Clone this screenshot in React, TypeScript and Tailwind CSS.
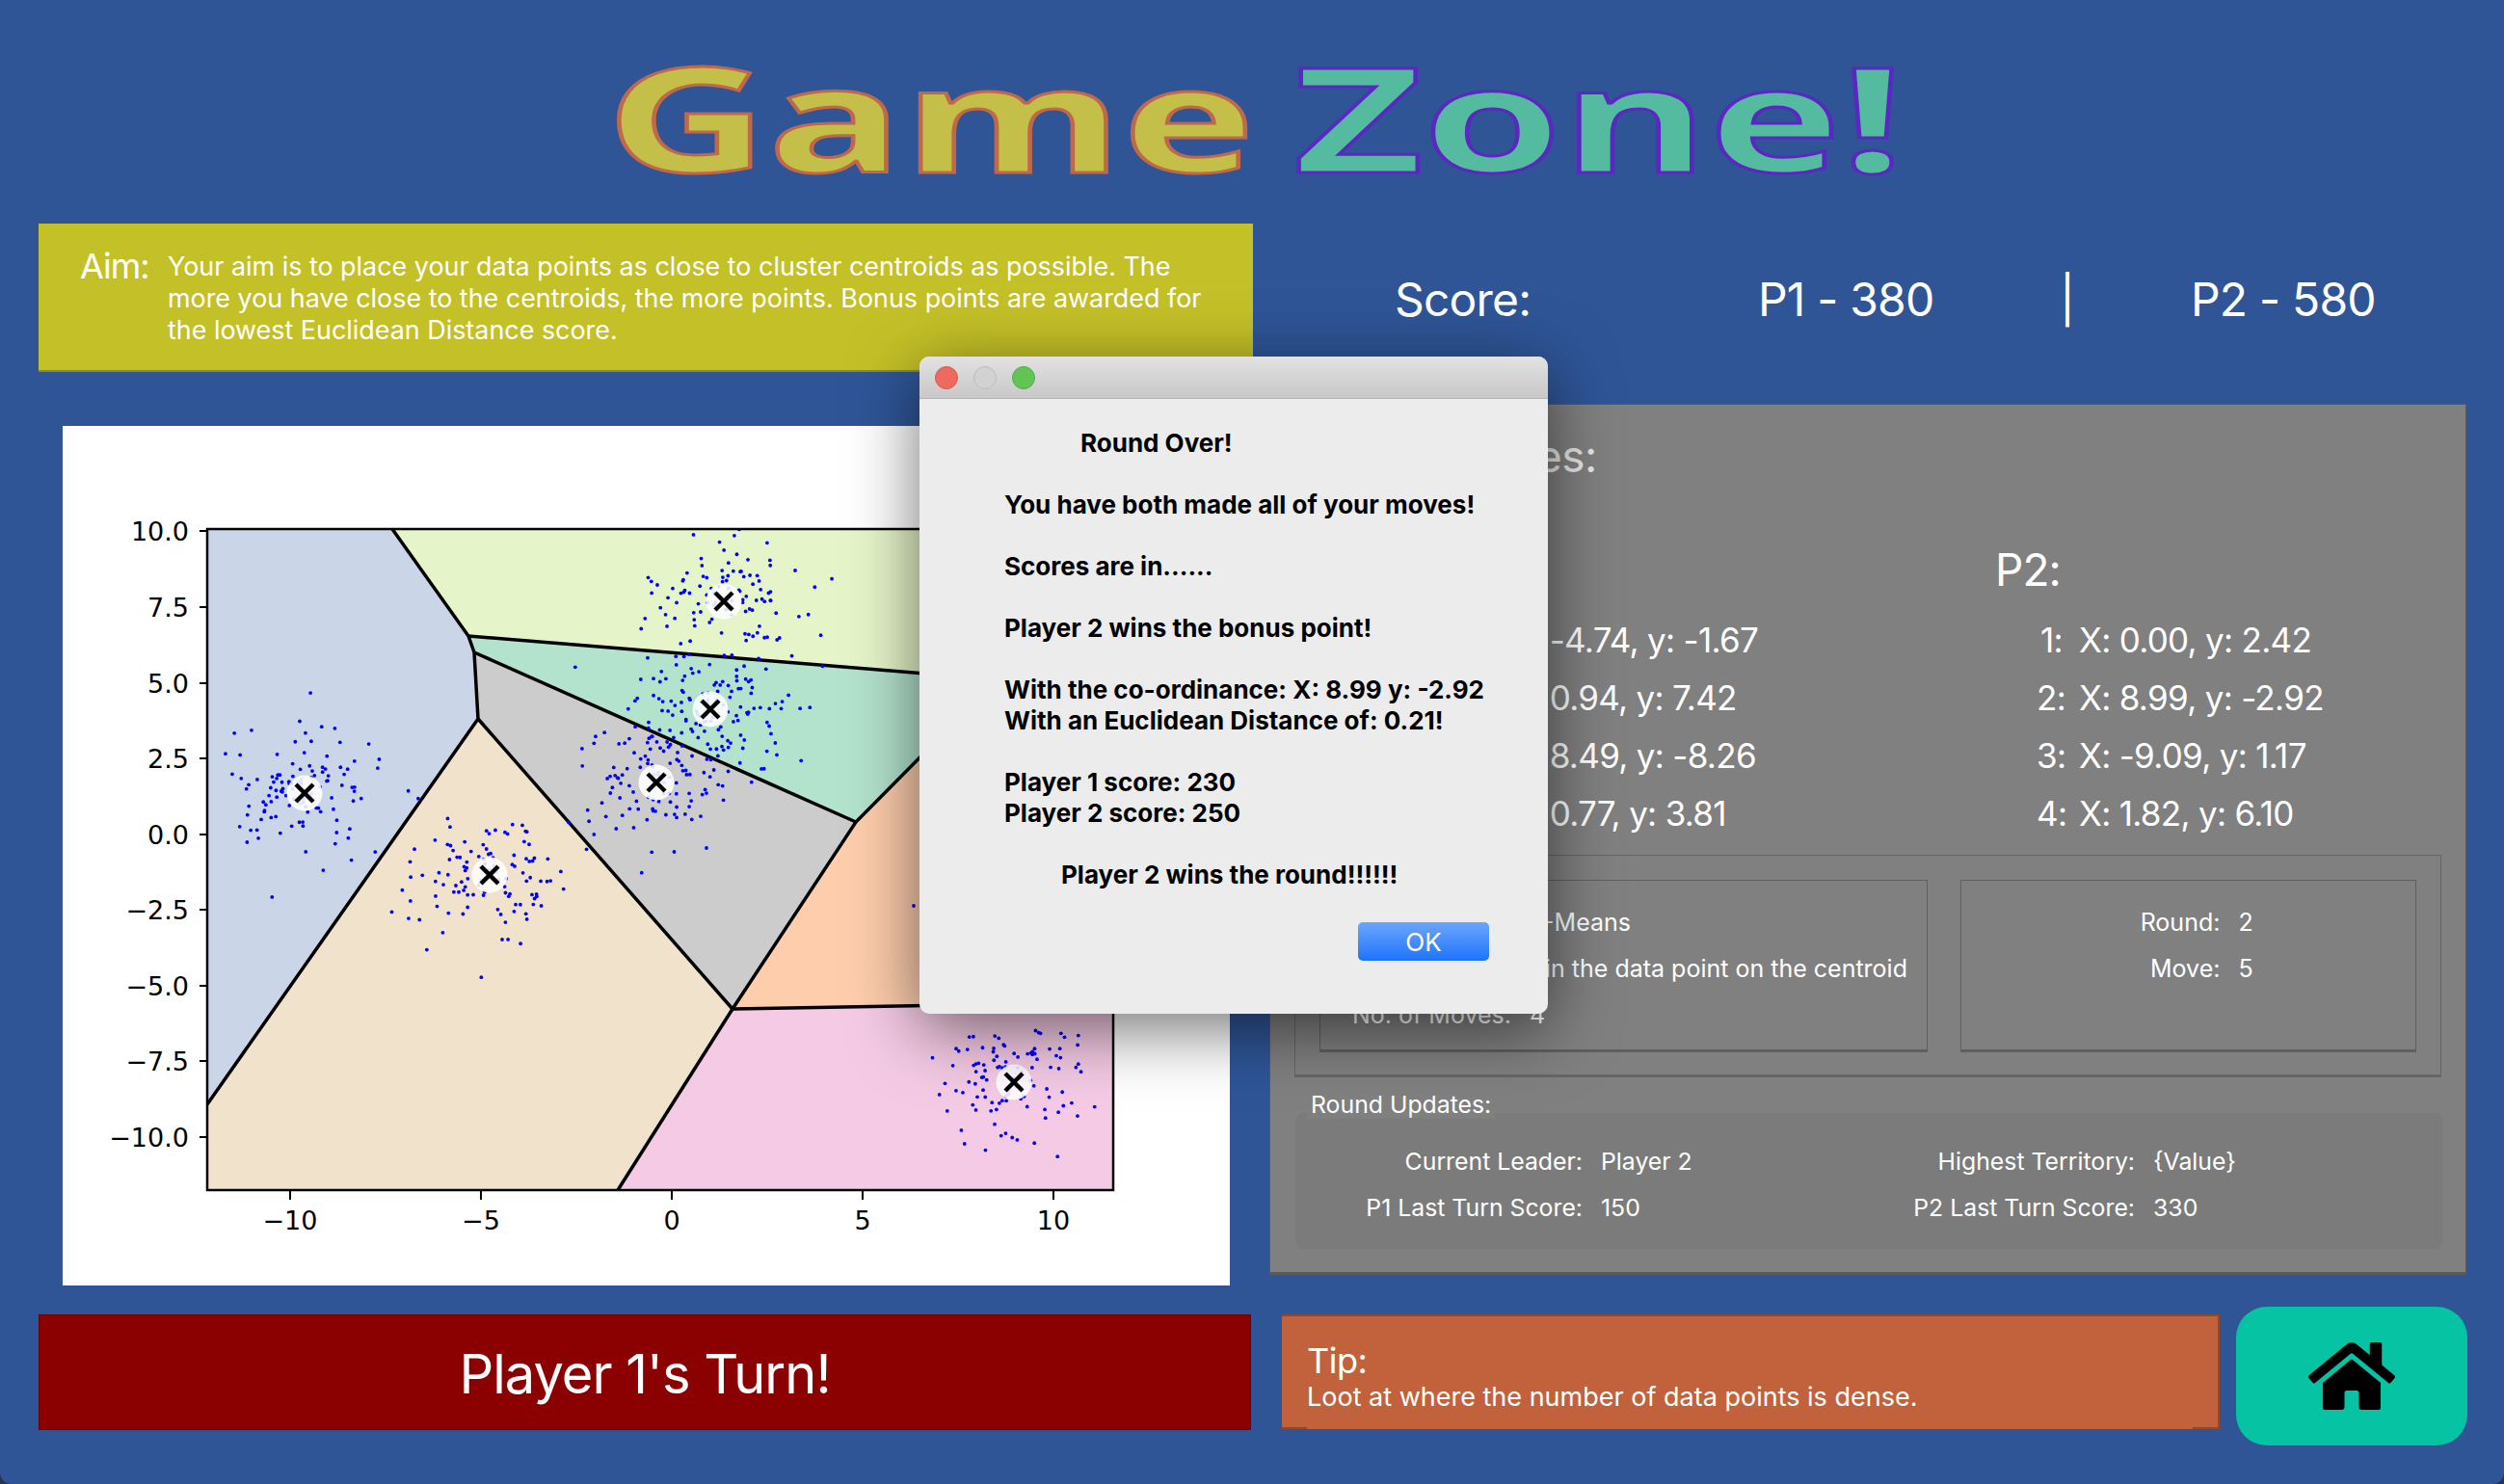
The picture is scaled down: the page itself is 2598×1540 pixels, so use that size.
import React from 'react';
import { FaHome } from 'react-icons/fa';

// seeded so the scatter stays the same between renders
const makeRandom = (seed: number) => () => {
  seed |= 0;
  seed = (seed + 0x6d2b79f5) | 0;
  let t = Math.imul(seed ^ (seed >>> 15), 1 | seed);
  t = (t + Math.imul(t ^ (t >>> 7), 61 | t)) ^ t;
  return ((t ^ (t >>> 14)) >>> 0) / 4294967296;
};

const centroids = [
  [316, 823],
  [508, 908],
  [751, 624],
  [737, 736],
  [681, 812],
  [1052, 1123],
];

const points: number[][] = [[948, 940], [733, 880]];
const rand = makeRandom(7);
const gauss = () => Math.sqrt(-2 * Math.log(rand() + 1e-6)) * Math.cos(2 * Math.PI * rand());
centroids.forEach(([cx, cy]) => {
  for (let i = 0; i < 115; i++) {
    points.push([cx + gauss() * 39, cy + gauss() * 33]);
  }
});

const xTicks = [
  { x: 301, label: '−10' },
  { x: 499, label: '−5' },
  { x: 697, label: '0' },
  { x: 895, label: '5' },
  { x: 1093, label: '10' },
];
const yTicks = [
  { y: 551, label: '10.0' },
  { y: 630, label: '7.5' },
  { y: 709, label: '5.0' },
  { y: 787, label: '2.5' },
  { y: 866, label: '0.0' },
  { y: 944, label: '−2.5' },
  { y: 1023, label: '−5.0' },
  { y: 1101, label: '−7.5' },
  { y: 1180, label: '−10.0' },
];

const VoronoiPlot = () => (
  <svg viewBox="65 442 1211 892" className="block w-[1211px] h-[892px]">
    <defs>
      <clipPath id="axes">
        <rect x="215" y="549" width="940" height="686" />
      </clipPath>
    </defs>
    <g clipPath="url(#axes)">
      <polygon points="215,549 407,549 486,660 492,677 496,746 215,1146" fill="#cbd5e8" />
      <polygon points="407,549 1155,549 1155,715 486,660" fill="#e6f5c9" />
      <polygon points="486,660 1155,715 1155,600 888,853 492,677" fill="#b3e2cd" />
      <polygon points="492,677 888,853 760,1047 496,746" fill="#cccccc" />
      <polygon points="496,746 760,1047 641,1235 215,1235 215,1146" fill="#f1e2cc" />
      <polygon points="888,853 1155,600 1155,1040 760,1047" fill="#fdcdac" />
      <polygon points="760,1047 1155,1040 1155,1235 641,1235" fill="#f4cae4" />
      <g fill="none" stroke="#000" strokeWidth="3.5">
        <polyline points="407,549 486,660 492,677 496,746 215,1146" />
        <line x1="486" y1="660" x2="1155" y2="715" />
        <line x1="492" y1="677" x2="888" y2="853" />
        <polyline points="1000,740 888,853 760,1047 496,746" />
        <line x1="760" y1="1047" x2="641" y2="1235" />
        <line x1="760" y1="1047" x2="1155" y2="1040" />
      </g>
      {points.map(([x, y], i) => (
        <circle key={i} cx={x} cy={y} r="1.9" fill="#0000ff" />
      ))}
      {centroids.map(([x, y]) => (
        <g key={x}>
          <circle cx={x} cy={y} r="18.5" fill="#fff" fillOpacity="0.88" />
          <path d={`M${x - 9} ${y - 9}L${x + 9} ${y + 9}M${x - 9} ${y + 9}L${x + 9} ${y - 9}`} stroke="#000" strokeWidth="4.5" />
        </g>
      ))}
    </g>
    <rect x="215" y="549" width="940" height="686" fill="none" stroke="#000" strokeWidth="2.5" />
    {xTicks.map((t) => (
      <g key={t.x}>
        <line x1={t.x} y1="1235" x2={t.x} y2="1245" stroke="#000" strokeWidth="2" />
        <text x={t.x} y="1276" textAnchor="middle" fontSize="27" fontFamily="DejaVu Sans" fill="#000">
          {t.label}
        </text>
      </g>
    ))}
    {yTicks.map((t) => (
      <g key={t.y}>
        <line x1="207" y1={t.y} x2="215" y2={t.y} stroke="#000" strokeWidth="2" />
        <text x="196" y={t.y + 10} textAnchor="end" fontSize="27" fontFamily="DejaVu Sans" fill="#000">
          {t.label}
        </text>
      </g>
    ))}
  </svg>
);

const MoveRow = ({ n, value }: { n: number; value: string }) => (
  <div className="flex h-[60px] items-center">
    <span className="w-[44px] text-right pr-[17px]">{n}:</span>
    <span>{value}</span>
  </div>
);

const p1Moves = ['X: -4.74, y: -1.67', 'X: 0.94, y: 7.42', 'X: 8.49, y: -8.26', 'X: 0.77, y: 3.81'];
const p2Moves = ['X: 0.00, y: 2.42', 'X: 8.99, y: -2.92', 'X: -9.09, y: 1.17', 'X: 1.82, y: 6.10'];

const FormRow = ({ label, value, labelWidth }: { label: string; value: string; labelWidth: string }) => (
  <div className="flex h-[48px] items-center">
    <span className={`${labelWidth} text-right`}>{label}</span>
    <span className="ml-[19px] whitespace-nowrap">{value}</span>
  </div>
);

const RoundOverDialog = () => (
  <div className="absolute left-[954px] top-[370px] w-[652px] h-[682px] rounded-[10px] bg-[#ececec] shadow-[0_16px_70px_rgba(0,0,0,0.55)] overflow-hidden">
    <div className="flex h-[44px] items-center gap-[16px] pl-[16px] bg-gradient-to-b from-[#e2e2e2] to-[#c8c8c8] border-b border-[#b4b4b4]">
      <span className="w-[24px] h-[24px] rounded-full bg-[#ee6a5e] border border-[#d9574c]" />
      <span className="w-[24px] h-[24px] rounded-full bg-[#d2d2d2] border border-[#bcbcbc]" />
      <span className="w-[24px] h-[24px] rounded-full bg-[#61c454] border border-[#52ad46]" />
    </div>
    <div className="pt-[30px] pl-[88px] text-[26px] leading-[32px] font-bold text-black whitespace-nowrap">
      <div className="pl-[79px]">Round Over!</div>
      <div className="mt-[32px]">You have both made all of your moves!</div>
      <div className="mt-[32px]">Scores are in......</div>
      <div className="mt-[32px]">Player 2 wins the bonus point!</div>
      <div className="mt-[32px]">With the co-ordinance: X: 8.99 y: -2.92</div>
      <div>With an Euclidean Distance of: 0.21!</div>
      <div className="mt-[32px]">Player 1 score: 230</div>
      <div>Player 2 score: 250</div>
      <div className="mt-[32px] pl-[59px]">Player 2 wins the round!!!!!!</div>
    </div>
    <div className="flex justify-end pr-[61px] mt-[33px]">
      <button className="w-[136px] h-[40px] rounded-[5px] bg-gradient-to-b from-[#6aa5fc] to-[#1a73fb] text-white text-[26px]">
        OK
      </button>
    </div>
  </div>
);

export default function App() {
  return (
    <div className="w-[2598px] h-[1540px] bg-[#26344f]">
      <div className="relative w-[2598px] h-[1540px] overflow-hidden rounded-b-[12px] bg-[#2f5597] font-['Inter','Noto_Sans',sans-serif] text-white">
        {/* Title */}
        <div className="flex h-[232px] justify-center pt-[26px] pl-[6px]">
          <h1 className="h-[190px] origin-center scale-x-[1.547] font-['Open_Sans',sans-serif] text-[150px] leading-[190px] font-bold whitespace-nowrap [word-spacing:-13px]">
            <span className="text-[#c4bf48] [-webkit-text-stroke:3px_#c0694a]">Game</span>{' '}
            <span className="text-[#55bba0] [-webkit-text-stroke:3px_#5a28c0]">Zone!</span>
          </h1>
        </div>

        {/* Aim and score */}
        <div className="flex pl-[40px]">
          <div className="flex w-[1260px] h-[154px] pl-[43px] pt-[28px] bg-[#c4c028] border-b-2 border-[#8f8c20]">
            <div className="w-[91px] -mt-[4px] text-[36px] leading-[40px] tracking-[-1px]">Aim:</div>
            <p className="w-[1090px] text-[26.9px] leading-[33px]">
              Your aim is to place your data points as close to cluster centroids as possible. The more you have close to
              the centroids, the more points. Bonus points are awarded for the lowest Euclidean Distance score.
            </p>
          </div>
          <div className="flex h-[154px] pt-[3px] items-center text-[48px] tracking-[-0.8px] whitespace-nowrap">
            <span className="ml-[147px] w-[377px]">Score:</span>
            <span className="w-[313px]">P1 - 380</span>
            <span className="w-[136px]">|</span>
            <span>P2 - 580</span>
          </div>
        </div>

        {/* Plot and moves panel */}
        <div className="flex mt-[33px] pl-[65px]">
          <div className="mt-[23px] w-[1211px] h-[892px] bg-white">
            <VoronoiPlot />
          </div>
          <div className="ml-[41px] w-[1242px] h-[904px] bg-[#808080] border border-[#5a5a5a] border-b-[3px]">
            <div className="pt-[25px] pl-[40px] text-[46px] leading-[56px] tracking-[-0.5px] text-[#e6e6e6]">Player Moves:</div>
            <div className="flex mt-[62px]">
              <div className="w-[752px] pl-[194px]">
                <div className="h-[56px]" />
              </div>
              <div className="text-[46px] leading-[56px] tracking-[-1px]">P2:</div>
            </div>
            <div className="flex mt-[15px] text-[35px] tracking-[-0.7px] whitespace-nowrap">
              <div className="w-[795px] pl-[204px]">
                {p1Moves.map((m, i) => (
                  <MoveRow key={m} n={i + 1} value={m} />
                ))}
              </div>
              <div>
                {p2Moves.map((m, i) => (
                  <MoveRow key={m} n={i + 1} value={m} />
                ))}
              </div>
            </div>

            {/* Settings group */}
            <div className="flex gap-[34px] mt-[13px] mx-[25px] h-[231px] w-[1190px] px-[25px] pt-[25px] border border-[#666666] border-b-[3px] text-[25px]">
              <div className="w-[632px] h-[179px] pt-[20px] border border-[#5f5f5f] border-b-[3px] overflow-hidden">
                <FormRow label="Algorithm:" value="K-Means" labelWidth="w-[198px]" />
                <FormRow label="Aim:" value="Pin the data point on the centroid" labelWidth="w-[198px]" />
                <FormRow label="No. of Moves:" value="4" labelWidth="w-[198px]" />
              </div>
              <div className="w-[473px] h-[179px] pt-[20px] border border-[#5f5f5f] border-b-[3px]">
                <FormRow label="Round:" value="2" labelWidth="w-[268px]" />
                <FormRow label="Move:" value="5" labelWidth="w-[268px]" />
              </div>
            </div>

            {/* Round updates */}
            <div className="relative mt-[37px] mx-[26px] h-[141px] rounded-[8px] bg-[#7b7b7b] text-[24.8px] w-[1190px]">
              <span className="absolute left-[12px] -top-[24px] px-[4px] h-[30px] leading-[30px] bg-[#808080]">Round Updates:</span>
              <div className="grid grid-cols-2 pt-[27px]">
                <FormRow label="Current Leader:" value="Player 2" labelWidth="w-[298px]" />
                <FormRow label="Highest Territory:" value="{Value}" labelWidth="w-[276px]" />
                <FormRow label="P1 Last Turn Score:" value="150" labelWidth="w-[298px]" />
                <FormRow label="P2 Last Turn Score:" value="330" labelWidth="w-[276px]" />
              </div>
            </div>
          </div>
        </div>

        {/* Turn, tip and home */}
        <div className="flex mt-[22px] pl-[40px]">
          <div className="mt-[8px] flex w-[1258px] h-[120px] pt-[4px] items-center justify-center bg-[#8b0000] border border-[#6e0000] text-[56px] tracking-[-1px]">
            Player 1's Turn!
          </div>
          <div className="relative mt-[8px] ml-[32px] w-[973px] h-[119px] pl-[26px] pt-[24px] bg-[#c2623d] border-t-2 border-r-2 border-[#8e4a30]">
            <div className="text-[36px] leading-[44px] tracking-[-0.5px]">Tip:</div>
            <div className="text-[27px] leading-[32px]">Loot at where the number of data points is dense.</div>
            <span className="absolute left-0 bottom-0 w-[26px] h-[2px] bg-[#8e4a30]" />
            <span className="absolute right-0 bottom-0 w-[26px] h-[2px] bg-[#8e4a30]" />
          </div>
          <button className="ml-[17px] flex w-[240px] h-[144px] items-center justify-center rounded-[32px] bg-[#05c3a3] text-black">
            <FaHome className="w-[90px] h-[80px]" />
          </button>
        </div>

        <RoundOverDialog />
      </div>
    </div>
  );
}
